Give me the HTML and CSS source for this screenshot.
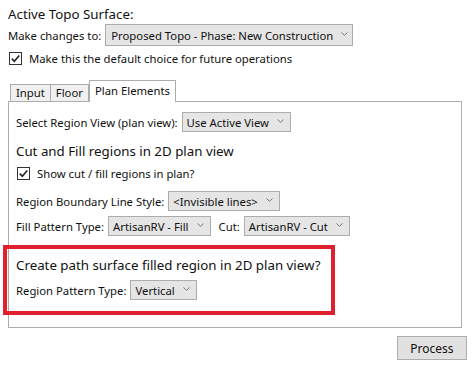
FILE: index.html
```html
<!DOCTYPE html>
<html lang="en">
<head>
    <meta charset="UTF-8">
    <meta name="viewport" content="width=device-width, initial-scale=1.0">
    <title>Topo Surface</title>
    <link rel="stylesheet" href="styles.css">
</head>
<body>
<div class="window">

    <div class="title">Active Topo Surface:</div>

    <div class="row">
        <span>Make changes to:</span>
        <div class="combo combo-main">Proposed Topo - Phase: New Construction<span class="chev"><svg width="7" height="4" viewBox="0 0 7 4"><path d="M0.5 0.5 L3.5 3.3 L6.5 0.5" fill="none" stroke="#777" stroke-width="1"/></svg></span></div>
    </div>

    <label class="check-row">
        <span class="checkbox"><svg width="11" height="11" viewBox="0 0 11 11"><path d="M1.8 5.6 L4.3 8.2 L9.3 2.4" fill="none" stroke="#222" stroke-width="1.6"/></svg></span>
        Make this the default choice for future operations
    </label>

    <div class="tabs">
        <div class="tab">Input</div>
        <div class="tab">Floor</div>
        <div class="tab tab-active">Plan Elements</div>
    </div>

    <div class="panel">
        <div class="row row-small">
            <span>Select Region View (plan view):</span>
            <div class="combo">Use Active View<span class="chev"><svg width="7" height="4" viewBox="0 0 7 4"><path d="M0.5 0.5 L3.5 3.3 L6.5 0.5" fill="none" stroke="#777" stroke-width="1"/></svg></span></div>
        </div>

        <div class="heading">Cut and Fill regions in 2D plan view</div>

        <label class="check-row">
            <span class="checkbox"><svg width="11" height="11" viewBox="0 0 11 11"><path d="M1.8 5.6 L4.3 8.2 L9.3 2.4" fill="none" stroke="#222" stroke-width="1.6"/></svg></span>
            Show cut / fill regions in plan?
        </label>

        <div class="row row-small row-gap">
            <span>Region Boundary Line Style:</span>
            <div class="combo">&lt;Invisible lines&gt;<span class="chev"><svg width="7" height="4" viewBox="0 0 7 4"><path d="M0.5 0.5 L3.5 3.3 L6.5 0.5" fill="none" stroke="#777" stroke-width="1"/></svg></span></div>
        </div>

        <div class="row row-small row-tight">
            <span>Fill Pattern Type:</span>
            <div class="combo">ArtisanRV - Fill<span class="chev"><svg width="7" height="4" viewBox="0 0 7 4"><path d="M0.5 0.5 L3.5 3.3 L6.5 0.5" fill="none" stroke="#777" stroke-width="1"/></svg></span></div>
            <span class="label-cut">Cut:</span>
            <div class="combo">ArtisanRV - Cut<span class="chev"><svg width="7" height="4" viewBox="0 0 7 4"><path d="M0.5 0.5 L3.5 3.3 L6.5 0.5" fill="none" stroke="#777" stroke-width="1"/></svg></span></div>
        </div>

        <div class="highlight">
            <div class="heading heading-flat">Create path surface filled region in 2D plan view?</div>
            <div class="row row-small row-tight">
                <span>Region Pattern Type:</span>
                <div class="combo">Vertical<span class="chev"><svg width="7" height="4" viewBox="0 0 7 4"><path d="M0.5 0.5 L3.5 3.3 L6.5 0.5" fill="none" stroke="#777" stroke-width="1"/></svg></span></div>
            </div>
        </div>
    </div>

    <div class="footer">
        <button class="button">Process</button>
    </div>

</div>
</body>
</html>
```

FILE: styles.css
```css
body {
    margin: 0;
    background-color: #fff;
    font-family: 'Noto Sans', 'Open Sans', sans-serif;
    font-size: 11.3px;
    color: #111;
}

.window {
    padding: 4px 9px 0 8px;
}

.title {
    font-size: 13.3px;
    line-height: 20px;
}

.row {
    display: flex;
    align-items: center;
    gap: 4px;
    height: 22px;
}

.row-small {
    height: 20px;
}

.row-gap {
    margin-top: 9px;
}

.row-tight {
    margin-top: 5px;
}

.label-cut {
    margin-left: 4px;
}

.combo {
    display: flex;
    align-items: center;
    height: 100%;
    box-sizing: border-box;
    padding: 0 6px 0 4px;
    background-color: #e5e5e5;
    border: 1px solid #acacac;
    white-space: nowrap;
}

.combo-main {
    padding-left: 5px;
    padding-right: 4px;
}

.chev {
    display: flex;
    margin-left: 8px;
    margin-top: -2px;
}

.check-row {
    display: flex;
    align-items: center;
    gap: 7px;
    height: 17px;
    margin-top: 4px;
    margin-left: 1px;
}

.checkbox {
    display: flex;
    align-items: center;
    justify-content: center;
    width: 13px;
    height: 13px;
    box-sizing: border-box;
    border: 1px solid #333;
    background-color: #fff;
}

.tabs {
    display: flex;
    align-items: flex-end;
    margin: 13px 0 0 2px;
    height: 21px;
}

.tab {
    height: 17px;
    line-height: 16px;
    padding: 0 5px;
    box-sizing: border-box;
    background-color: #f0f0f0;
    border: 1px solid #acacac;
    border-bottom: none;
}

.tab + .tab {
    border-left: none;
}

.tab-active {
    position: relative;
    height: 22px;
    line-height: 19px;
    padding: 0 5px;
    margin-bottom: -1px;
    background-color: #fff;
    border-left: 1px solid #acacac !important;
}

.panel {
    margin-right: 5px;
    border: 1px solid #acacac;
    padding: 10px 8px 12px 7px;
}

.heading {
    font-size: 13.3px;
    line-height: 20px;
    margin-top: 9px;
}

.heading-flat {
    margin-top: 0;
}

.highlight {
    position: relative;
    margin-top: 9px;
    padding: 10px 0 15px 0;
}

.highlight::before {
    content: "";
    position: absolute;
    top: 0;
    bottom: 0;
    left: -13px;
    width: 332px;
    box-sizing: border-box;
    border: 4px solid #e0202c;
}

.footer {
    display: flex;
    justify-content: flex-end;
    margin-top: 8px;
}

.button {
    width: 70px;
    height: 24px;
    font-family: inherit;
    font-size: 12px;
    color: #111;
    background-color: #e1e1e1;
    border: 1px solid #adadad;
}
```
